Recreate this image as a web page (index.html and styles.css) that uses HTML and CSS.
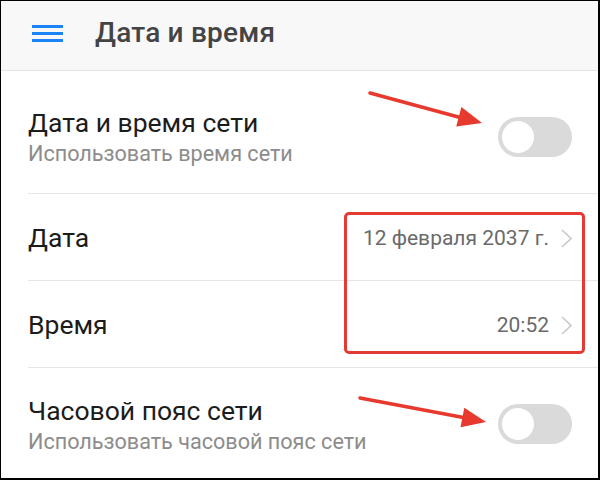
FILE: index.html
```html
<!DOCTYPE html>
<html lang="ru">
<head>
<meta charset="utf-8">
<title>Дата и время</title>
<link rel="stylesheet" href="styles.css">
</head>
<body>
<div class="screen">
  <header class="appbar">
    <span class="menu"><i></i><i></i><i></i></span>
    <h1 class="title">Дата и время</h1>
  </header>
  <main class="list">
    <div class="row row-net">
      <div class="texts">
        <div class="label">Дата и время сети</div>
        <div class="sub">Использовать время сети</div>
      </div>
      <span class="switch switch-net"><span class="knob"></span></span>
    </div>
    <div class="row row-value">
      <div class="label">Дата</div>
      <div class="value">12 февраля 2037 г.<svg class="chev" width="11" height="19" viewBox="0 0 11 19"><path d="M1 1 L10 9.5 L1 18" fill="none" stroke="#c9c9c9" stroke-width="1.6"/></svg></div>
    </div>
    <div class="row row-value">
      <div class="label">Время</div>
      <div class="value">20:52<svg class="chev" width="11" height="19" viewBox="0 0 11 19"><path d="M1 1 L10 9.5 L1 18" fill="none" stroke="#c9c9c9" stroke-width="1.6"/></svg></div>
    </div>
    <div class="row row-tz">
      <div class="texts">
        <div class="label">Часовой пояс сети</div>
        <div class="sub">Использовать часовой пояс сети</div>
      </div>
      <span class="switch switch-tz"><span class="knob"></span></span>
    </div>
  </main>
  <div class="redbox"></div>
  <svg class="arrows" width="600" height="480" viewBox="0 0 600 480">
    <line x1="370" y1="93" x2="462" y2="118" stroke="#e8392f" stroke-width="3.5" stroke-linecap="round"/>
    <polygon points="482,123 461.4,107.1 456.2,126.5" fill="#e8392f"/>
    <line x1="360" y1="398" x2="466" y2="418" stroke="#e8392f" stroke-width="3.5" stroke-linecap="round"/>
    <polygon points="486,422 464.3,407.7 460.5,427.3" fill="#e8392f"/>
  </svg>
</div>
</body>
</html>
```

FILE: styles.css
```css
* { box-sizing: border-box; margin: 0; padding: 0; }

body {
  margin: 0;
  background: #ffffff;
  font-family: Roboto, "Noto Sans", "Liberation Sans", sans-serif;
}

.screen {
  position: relative;
  width: 600px;
  height: 480px;
  overflow: hidden;
  background: #ffffff;
  border-style: solid;
  border-color: #000;
  border-width: 1px 2px 2px 1px;
}

.appbar {
  height: 70px;
  background: #f8f8f8;
  border-bottom: 1px solid #e7e3e3;
  display: flex;
  align-items: center;
  padding-left: 31px;
  padding-bottom: 7px;
}

.menu {
  display: flex;
  flex-direction: column;
  gap: 4px;
  width: 31px;
  margin-top: 3px;
}
.menu i {
  display: block;
  height: 3px;
  background: #1a84f6;
}

.title {
  margin-left: 32px;
  font-size: 28px;
  font-weight: 500;
  color: #444444;
  letter-spacing: 0.2px;
}

.list {
  margin-left: 27px;
}

.row {
  display: flex;
  padding-right: 26px;
  border-top: 1px solid #e6e6e6;
}
.row:first-child { border-top: none; }

.row-net {
  height: 122px;
  align-items: flex-start;
  padding-top: 37px;
}
.row-value {
  height: 87px;
  align-items: center;
  padding-top: 2px;
}
.row-tz {
  height: 120px;
  align-items: flex-start;
  padding-top: 28px;
}

.texts { flex: 1; }

.label {
  flex: 1;
  font-size: 26.5px;
  line-height: 30px;
  color: #1c1c1c;
}

.sub {
  margin-top: 3px;
  font-size: 21.6px;
  line-height: 26px;
  color: #8c8c8c;
}

.value {
  display: flex;
  align-items: center;
  gap: 12px;
  font-size: 21px;
  color: #6a6a6a;
}
.chev { display: block; }

.switch {
  position: relative;
  width: 74px;
  height: 40px;
  border-radius: 20px;
  background: #dadada;
  flex: none;
}
.switch-net { margin-top: 9px; }
.switch-tz { margin-top: 8px; }
.knob {
  position: absolute;
  left: 4px;
  top: 4px;
  width: 32px;
  height: 32px;
  border-radius: 50%;
  background: #ffffff;
}

.redbox {
  position: absolute;
  left: 343px;
  top: 211px;
  width: 241px;
  height: 142px;
  border: 3px solid #e53a32;
  border-radius: 5px;
}

.arrows {
  position: absolute;
  left: -1px;
  top: -1px;
}
```
